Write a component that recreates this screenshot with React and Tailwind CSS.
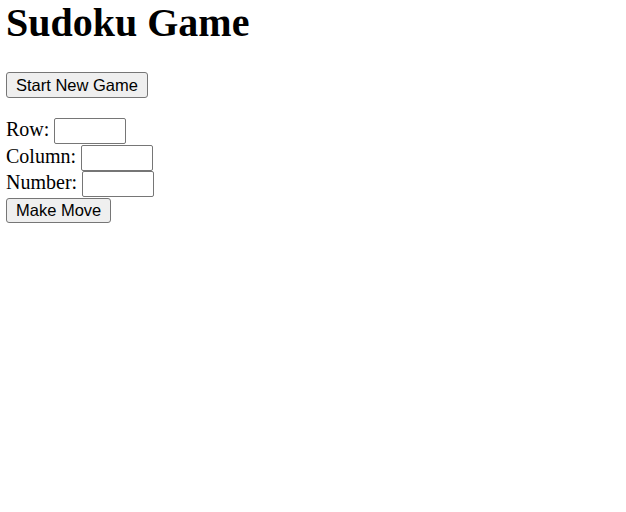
import React from 'react';

function Field({ label }) {
    return (
        <div className="flex items-start h-[26.5px]">
            <span className="text-[20px] leading-[22px]">{label}</span>
            <input type="text" className="ml-[5px] w-[72px] h-[26px] border border-[#767676] rounded-[2px] bg-white px-[2px] text-[16.5px]" />
        </div>
    );
}

function App() {
    return (
        <div className="min-h-[512px] bg-white text-black pl-[6px] font-['Liberation_Serif',_'Times_New_Roman',_serif]">
            <h1 className="text-[40px] font-bold leading-[46px]">Sudoku Game</h1>

            <button className="mt-[26px] h-[26px] px-[9px] border border-[#767676] rounded-[3px] bg-[#efefef] text-[16.5px] leading-[19px] font-['Liberation_Sans',_Arial,_sans-serif]">
                Start New Game
            </button>

            <div className="mt-[20px] flex flex-col items-start">
                <Field label="Row:" />
                <Field label="Column:" />
                <Field label="Number:" />
                <button className="h-[25.5px] px-[9px] border border-[#767676] rounded-[3px] bg-[#efefef] text-[16.5px] leading-[19px] font-['Liberation_Sans',_Arial,_sans-serif]">
                    Make Move
                </button>
            </div>
        </div>
    );
}

export default App;
